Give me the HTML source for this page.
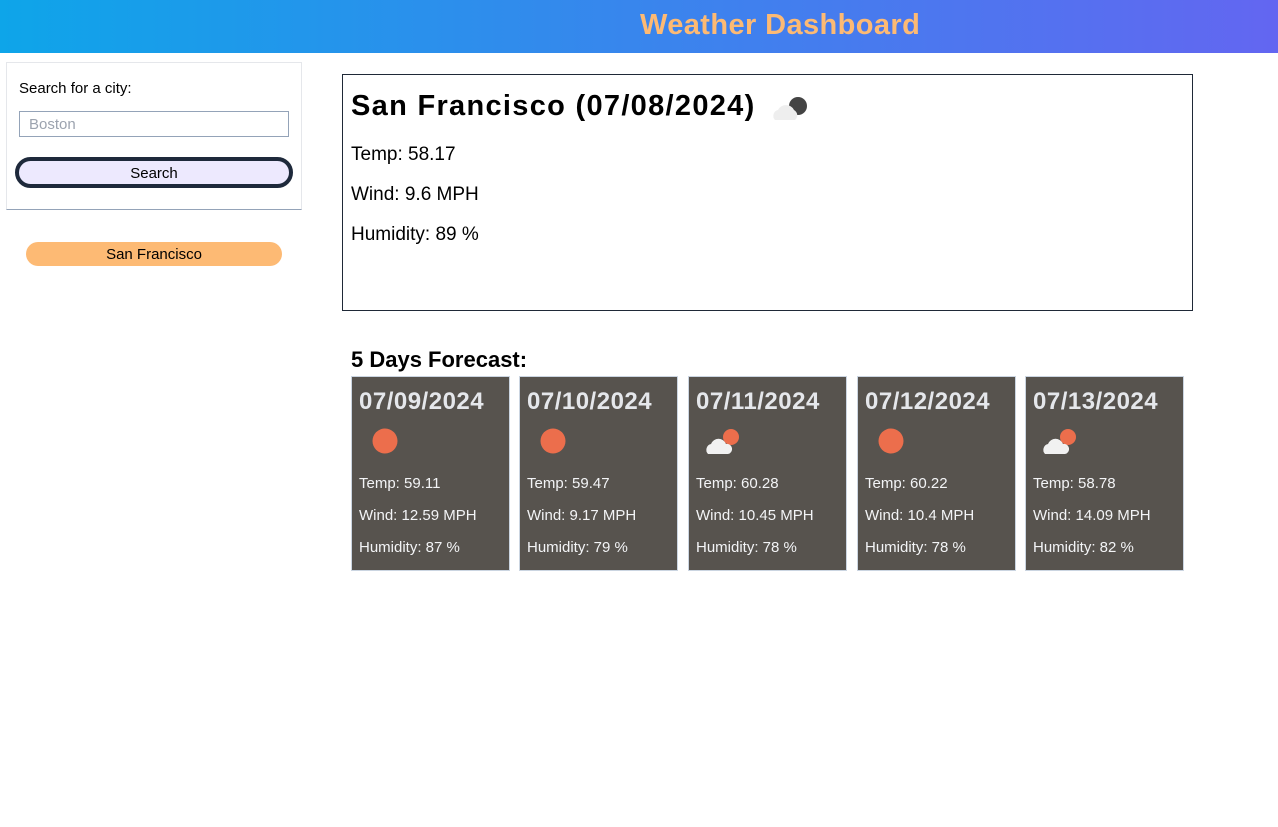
<!DOCTYPE html>
<html><head><meta charset="utf-8"><style>
*{box-sizing:border-box;margin:0;padding:0}
body{width:1278px;height:827px;background:#fff;font-family:"Liberation Sans",sans-serif;position:relative;overflow:hidden}
header{position:absolute;left:0;top:0;width:1278px;height:53px;background:linear-gradient(90deg,#0ea5e9,#6366f1)}
header h1{position:absolute;left:640px;top:9px;font-size:29px;letter-spacing:0.4px;color:#fdba74;font-weight:bold}
.search{position:absolute;left:6px;top:62px;width:296px;height:148px;border:1px solid #e5e7eb;border-bottom-color:#94a3b8}
.search .lbl{position:absolute;left:12px;top:17px;font-size:15px}
.search .inp{position:absolute;left:12px;top:48px;width:270px;height:26px;border:1px solid #94a3b8;color:#9ca3af;font-size:15px;padding:4px 9px}
.search .btn{position:absolute;left:8px;top:94px;width:278px;height:31px;border:4px solid #1e293b;border-radius:16px;background:#ede9fe;text-align:center;font-size:15px;line-height:25px}
.city{position:absolute;left:26px;top:242px;width:256px;height:24px;background:#fdba74;border-radius:12px;text-align:center;font-size:15px;line-height:26px}
.cur{position:absolute;left:342px;top:74px;width:851px;height:237px;border:1px solid #1f2937}
.cur h2{position:absolute;left:8px;top:15px;font-size:29px;letter-spacing:1.3px;font-weight:bold}
.cur p{position:absolute;left:8px;font-size:19px}
.fh{position:absolute;left:351px;top:347px;font-size:22px;font-weight:bold}
.card{position:absolute;top:376px;width:159px;height:195px;background:#57534e;color:#f3f4f6;border:1px solid #cbd5e1}
.card h3{position:absolute;left:7px;top:11px;font-size:24px;letter-spacing:0.5px;font-weight:bold;color:#e5e7eb}
.card p{position:absolute;left:7px;font-size:15px}
.card svg{position:absolute;left:10px;top:48px}
</style></head><body>
<header><h1>Weather Dashboard</h1></header>
<div class="search"><div class="lbl">Search for a city:</div><div class="inp">Boston</div><div class="btn">Search</div></div>
<div class="city">San Francisco</div>
<div class="cur"><h2>San Francisco (07/08/2024)</h2>
<svg style="position:absolute;left:428px;top:16px" width="40" height="32"><circle cx="27" cy="15" r="9" fill="#444"/><path d="M4 29 a6 6 0 0 1 3-10 a9 9 0 0 1 16 0 a6 6 0 0 1 1 10z" fill="#eee"/></svg>
<p style="top:69px">Temp: 58.17</p><p style="top:109px">Wind: 9.6 MPH</p><p style="top:149px">Humidity: 89 %</p></div>
<div class="fh">5 Days Forecast:</div>

<div class="card" style="left:351px"><h3>07/09/2024</h3><svg width="40" height="30"><circle cx="23" cy="16" r="12.5" fill="#ec6e4c"/></svg><p style="top:98px">Temp: 59.11</p><p style="top:130px">Wind: 12.59 MPH</p><p style="top:162px">Humidity: 87 %</p></div>
<div class="card" style="left:519px"><h3>07/10/2024</h3><svg width="40" height="30"><circle cx="23" cy="16" r="12.5" fill="#ec6e4c"/></svg><p style="top:98px">Temp: 59.47</p><p style="top:130px">Wind: 9.17 MPH</p><p style="top:162px">Humidity: 79 %</p></div>
<div class="card" style="left:688px"><h3>07/11/2024</h3><svg width="40" height="30"><circle cx="32" cy="12" r="8" fill="#ec6e4c"/><path d="M9 29 a6 6 0 0 1 3-10 a8 8 0 0 1 15 0 a5 5 0 0 1 2 10z" fill="#f1f1f1"/></svg><p style="top:98px">Temp: 60.28</p><p style="top:130px">Wind: 10.45 MPH</p><p style="top:162px">Humidity: 78 %</p></div>
<div class="card" style="left:857px"><h3>07/12/2024</h3><svg width="40" height="30"><circle cx="23" cy="16" r="12.5" fill="#ec6e4c"/></svg><p style="top:98px">Temp: 60.22</p><p style="top:130px">Wind: 10.4 MPH</p><p style="top:162px">Humidity: 78 %</p></div>
<div class="card" style="left:1025px"><h3>07/13/2024</h3><svg width="40" height="30"><circle cx="32" cy="12" r="8" fill="#ec6e4c"/><path d="M9 29 a6 6 0 0 1 3-10 a8 8 0 0 1 15 0 a5 5 0 0 1 2 10z" fill="#f1f1f1"/></svg><p style="top:98px">Temp: 58.78</p><p style="top:130px">Wind: 14.09 MPH</p><p style="top:162px">Humidity: 82 %</p></div>
</body></html>
